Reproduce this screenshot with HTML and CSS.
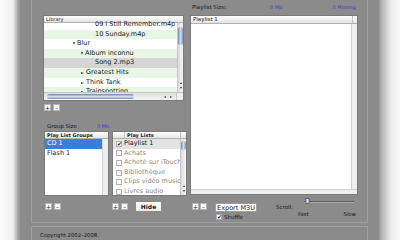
FILE: index.html
```html
<!DOCTYPE html>
<html lang="en">
<head>
    <meta charset="UTF-8">
    <meta name="viewport" content="width=device-width, initial-scale=1.0">
    <title>Playlist Manager</title>
    <link rel="stylesheet" href="styles.css">
</head>
<body>
<div class="desk">
    <div class="window">
        <div class="panel">
            <div class="left-col">
                <div class="box library">
                    <div class="box-head">Library</div>
                    <div class="box-body">
                        <div class="rows lib-rows">
                            <div class="row file">09 I Still Remember.m4p</div>
                            <div class="row file alt">10 Sunday.m4p</div>
                            <div class="row artist"><span class="tri down"></span>Blur</div>
                            <div class="row album alt"><span class="tri down"></span>Album inconnu</div>
                            <div class="row file selected">Song 2.mp3</div>
                            <div class="row album alt"><span class="tri right"></span>Greatest Hits</div>
                            <div class="row album"><span class="tri right"></span>Think Tank</div>
                            <div class="row album alt"><span class="tri right"></span>Trainspotting</div>
                        </div>
                        <div class="vscroll">
                            <div class="vthumb"></div>
                            <div class="varrows"><span class="arr up"></span><span class="arr dn"></span></div>
                        </div>
                    </div>
                    <div class="hscroll">
                        <div class="hthumb"></div>
                        <div class="harrows"><span class="arr lt"></span><span class="arr rt"></span></div>
                        <div class="corner"></div>
                    </div>
                </div>

                <div class="pair lib-pair">
                    <div class="mini">+</div>
                    <div class="mini">–</div>
                </div>

                <div class="group-size">
                    <span class="label">Group Size</span>
                    <span class="value">0 Mb</span>
                </div>

                <div class="lists-row">
                    <div class="box groups">
                        <div class="box-head">Play List Groups</div>
                        <div class="box-body">
                            <div class="rows">
                                <div class="row gsel">CD 1</div>
                                <div class="row">Flash 1</div>
                            </div>
                            <div class="strip"></div>
                        </div>
                    </div>

                    <div class="box playlists">
                        <div class="box-head cols">
                            <span class="c-check"></span>
                            <span class="c-name">Play Lists</span>
                            <span class="c-end"></span>
                        </div>
                        <div class="box-body">
                            <div class="rows">
                                <div class="row pl on"><span class="cb">✔</span><span class="pl-name">Playlist 1</span></div>
                                <div class="row pl"><span class="cb"></span><span class="pl-name">Achats</span></div>
                                <div class="row pl"><span class="cb"></span><span class="pl-name">Acheté sur iTouch</span></div>
                                <div class="row pl"><span class="cb"></span><span class="pl-name">Bibliothèque</span></div>
                                <div class="row pl"><span class="cb"></span><span class="pl-name">Clips vidéo musicaux</span></div>
                                <div class="row pl"><span class="cb"></span><span class="pl-name">Livres audio</span></div>
                            </div>
                            <div class="vscroll small">
                                <div class="vthumb"></div>
                                <div class="varrows"><span class="arr up"></span><span class="arr dn"></span></div>
                            </div>
                        </div>
                    </div>
                </div>

                <div class="btn-row">
                    <div class="pair">
                        <div class="mini">+</div>
                        <div class="mini">–</div>
                    </div>
                    <div class="pair pl-pair">
                        <div class="mini">+</div>
                        <div class="mini">–</div>
                    </div>
                    <div class="hide-btn">Hide</div>
                </div>
            </div>

            <div class="right-col">
                <div class="size-row">
                    <span class="size-label">Playlist Size:</span>
                    <span class="blue">0 Mb</span>
                    <span class="blue missing">0 Missing</span>
                </div>

                <div class="box playlist">
                    <div class="box-head cols">
                        <span class="c-name">Playlist 1</span>
                        <span class="c-end wide"></span>
                    </div>
                    <div class="box-body">
                        <div class="rows"></div>
                        <div class="strip"></div>
                    </div>
                    <div class="bottom-strip"></div>
                </div>

                <div class="controls">
                    <div class="pair tight">
                        <div class="mini">+</div>
                        <div class="mini">–</div>
                    </div>
                    <div class="export">
                        <div class="export-btn">Export M3U</div>
                        <div class="shuffle"><span class="cb">✔</span>Shuffle</div>
                    </div>
                    <div class="scroll-label">Scroll:</div>
                    <div class="slider">
                        <div class="track"><div class="knob"></div></div>
                        <div class="ends"><span>Fast</span><span>Slow</span></div>
                    </div>
                </div>
            </div>
        </div>

        <div class="footer">Copyright 2002–2008.</div>
    </div>
</div>
</body>
</html>
```

FILE: styles.css
```css
body {
    margin: 0;
    font-family: "DejaVu Sans", "Liberation Sans", sans-serif;
    color: #1a1a1a;
}
.desk {
    width: 400px;
    height: 240px;
    overflow: hidden;
    display: flex;
    background: linear-gradient(to right, #fbfbfb 0, #f0f0f0 13px, #a5a5a5 18px, #8b8b8b 21px, #8b8b8b 378px, #b8b8b8 382px, #ececec 391px, #fbfbfb 400px);
}
.window {
    margin-left: 20px;
    width: 358px;
    height: 240px;
    box-sizing: border-box;
    padding-left: 11px;
    background: #8b8b8b;
}
.panel {
    width: 337px;
    height: 223px;
    box-sizing: border-box;
    display: flex;
    padding-left: 11px;
    border: 1px solid #a0a0a0;
    border-top: none;
}
.left-col {
    width: 144px;
    padding-top: 15px;
    display: flex;
    flex-direction: column;
}
.right-col {
    width: 168px;
    margin-left: 3px;
    display: flex;
    flex-direction: column;
}

/* boxes */
.box {
    background: #fff;
    border: 1px solid #7a7a7a;
    box-sizing: border-box;
    display: flex;
    flex-direction: column;
    overflow: hidden;
}
.box-head {
    height: 6px;
    line-height: 6px;
    font-size: 5px;
    padding-left: 2px;
    color: #222;
    background: linear-gradient(#ffffff, #e4e4e4);
    border-bottom: 1px solid #b0b0b0;
    white-space: nowrap;
    flex: none;
}
.box-head.cols {
    display: flex;
    padding-left: 0;
}
.c-check {
    width: 11px;
    border-right: 1px solid #c0c0c0;
}
.c-name {
    flex: 1;
    padding-left: 2px;
}
.c-end {
    width: 5px;
    border-left: 1px solid #c0c0c0;
}
.c-end.wide {
    width: 4px;
}
.box-body {
    flex: 1;
    display: flex;
    min-height: 0;
}
.rows {
    flex: 1;
    min-width: 0;
    overflow: hidden;
}
.row {
    height: 9.6px;
    line-height: 9.6px;
    font-size: 6.5px;
    white-space: nowrap;
    overflow: hidden;
    padding-left: 2px;
}
.strip {
    width: 5px;
    background: #efefef;
    border-left: 1px solid #d2d2d2;
}

/* library */
.library {
    width: 141px;
    height: 86px;
}
.lib-rows {
    margin-top: -3px;
}
.lib-rows .row.file {
    padding-left: 51px;
}
.lib-rows .row.artist {
    padding-left: 29px;
}
.lib-rows .row.album {
    padding-left: 37px;
}
.alt {
    background: #e7f6e5;
}
.selected {
    background: #d5d5d5;
}
.tri {
    display: inline-block;
    width: 0;
    height: 0;
    margin-right: 2px;
    vertical-align: 0;
}
.tri.down {
    border-left: 1.5px solid transparent;
    border-right: 1.5px solid transparent;
    border-top: 3px solid #3a3a3a;
}
.tri.right {
    border-top: 1.5px solid transparent;
    border-bottom: 1.5px solid transparent;
    border-left: 3px solid #3a3a3a;
}
.arr {
    display: block;
    width: 0;
    height: 0;
}
.arr.up {
    border-left: 1.5px solid transparent;
    border-right: 1.5px solid transparent;
    border-bottom: 2px solid #333;
    margin-bottom: 3px;
}
.arr.dn {
    border-left: 1.5px solid transparent;
    border-right: 1.5px solid transparent;
    border-top: 2px solid #333;
}
.arr.lt {
    border-top: 1.5px solid transparent;
    border-bottom: 1.5px solid transparent;
    border-right: 2px solid #333;
}
.arr.rt {
    border-top: 1.5px solid transparent;
    border-bottom: 1.5px solid transparent;
    border-left: 2px solid #333;
}
.vscroll {
    width: 5px;
    display: flex;
    flex-direction: column;
    align-items: center;
    background: linear-gradient(to right, #dcdcdc, #f7f7f7);
    border-left: 1px solid #c6c6c6;
}
.vthumb {
    margin-top: 4px;
    width: 5px;
    height: 18px;
    border-radius: 3px;
    background: linear-gradient(to right, #6f87b0, #cfdcef, #7f96bd);
}
.varrows {
    margin-top: auto;
    margin-bottom: 3px;
    display: flex;
    flex-direction: column;
    align-items: center;
}
.vscroll.small .vthumb {
    margin-top: 2px;
    height: 9px;
}
.hscroll {
    height: 7px;
    display: flex;
    align-items: center;
    background: linear-gradient(#dedede, #f6f6f6);
    border-top: 1px solid #c6c6c6;
    flex: none;
}
.hthumb {
    margin-left: 3px;
    width: 87px;
    height: 5px;
    border-radius: 3px;
    background: linear-gradient(#6f87b0, #d3dff0, #7f96bd);
}
.harrows {
    margin-left: 30px;
    display: flex;
    gap: 4px;
}
.corner {
    margin-left: auto;
    width: 6px;
    height: 7px;
    background: #efefef;
    border-left: 1px solid #c6c6c6;
}

/* small buttons */
.pair {
    display: flex;
    gap: 2px;
}
.pair.tight {
    gap: 1px;
}
.mini {
    width: 7px;
    height: 7px;
    box-sizing: border-box;
    background: #fafafa;
    border: 1px solid #b4b4b4;
    font-size: 6px;
    line-height: 5px;
    text-align: center;
    color: #222;
}
.lib-pair {
    margin-top: 3px;
    margin-left: 1px;
}

/* groups */
.group-size {
    margin-top: 11px;
    height: 8px;
    line-height: 8px;
    font-size: 5.5px;
    padding-left: 4px;
    display: flex;
}
.group-size .label {
    width: 50px;
}
.group-size .value {
    color: #3644c8;
    font-size: 5px;
}
.lists-row {
    margin-top: 1px;
    display: flex;
}
.groups {
    margin-left: 1px;
    width: 65px;
    height: 65px;
}
.groups .box-head,
.playlists .box-head {
    font-weight: bold;
}
.gsel {
    background: #3b7ddc;
    color: #fff;
}
.playlists {
    margin-left: 3px;
    width: 75px;
    height: 65px;
}
.row.pl {
    display: flex;
    align-items: center;
    padding-left: 0;
    color: #8a8a8a;
}
.pl-name {
    overflow: hidden;
    white-space: nowrap;
}
.row.pl.on {
    color: #111;
    background: #e3e3e3;
}
.cb {
    flex: none;
    width: 6px;
    height: 6px;
    box-sizing: border-box;
    margin: 0 2px 0 3px;
    background: #fff;
    border: 1px solid #b0b0b0;
    font-size: 6px;
    line-height: 4px;
    color: #111;
    text-align: center;
}
.btn-row {
    margin-top: 5px;
    display: flex;
    align-items: center;
    height: 10px;
    padding-left: 2px;
}
.pl-pair {
    margin-left: 51px;
}
.hide-btn {
    margin-left: 8px;
    width: 25px;
    height: 9px;
    line-height: 9px;
    text-align: center;
    font-size: 6px;
    font-weight: bold;
    background: linear-gradient(#ffffff, #ececec);
}

/* playlist side */
.size-row {
    height: 15px;
    line-height: 14px;
    font-size: 5.5px;
    display: flex;
    padding: 0 2px;
}
.size-label {
    width: 78px;
}
.blue {
    color: #3644c8;
    font-size: 5px;
}
.missing {
    margin-left: auto;
}
.playlist {
    height: 180px;
}
.playlist .box-head {
    font-size: 5.5px;
    height: 7px;
    line-height: 7px;
}
.bottom-strip {
    height: 4px;
    background: #efefef;
    border-top: 1px solid #d2d2d2;
    flex: none;
}
.controls {
    display: flex;
    align-items: flex-start;
}
.controls .pair {
    margin-top: 8px;
    margin-left: 2px;
}
.export {
    margin-left: 8px;
    margin-top: 8px;
}
.export-btn {
    width: 42px;
    height: 9px;
    line-height: 9px;
    box-sizing: border-box;
    text-align: center;
    font-size: 6.5px;
    background: #fff;
    border: 1px solid #9c9c9c;
}
.shuffle {
    margin-top: 1px;
    display: flex;
    align-items: center;
    font-size: 5.5px;
    height: 7px;
}
.shuffle .cb {
    margin: 0 2px 0 1px;
}
.scroll-label {
    margin-left: 19px;
    margin-top: 9px;
    font-size: 5.5px;
}
.slider {
    margin-left: 5px;
    width: 58px;
}
.track {
    margin-top: 6px;
    margin-left: 6px;
    width: 50px;
    height: 1px;
    background: #5e5e5e;
    border-bottom: 1px solid #a8a8a8;
    position: relative;
}
.knob {
    position: absolute;
    left: 1px;
    top: -3px;
    width: 5px;
    height: 6px;
    border-radius: 1px 1px 3px 3px;
    background: linear-gradient(to right, #8aa0c4, #e2e9f4, #8aa0c4);
    border: 1px solid #6a6a6a;
    box-sizing: border-box;
}
.ends {
    margin-top: 8px;
    display: flex;
    justify-content: space-between;
    font-size: 5.3px;
}

/* footer */
.footer {
    margin-top: 3px;
    width: 337px;
    height: 20px;
    box-sizing: border-box;
    border: 1px solid #a0a0a0;
    border-bottom: none;
    padding: 5px 0 0 8px;
    font-size: 5.3px;
    line-height: 6px;
}
```
